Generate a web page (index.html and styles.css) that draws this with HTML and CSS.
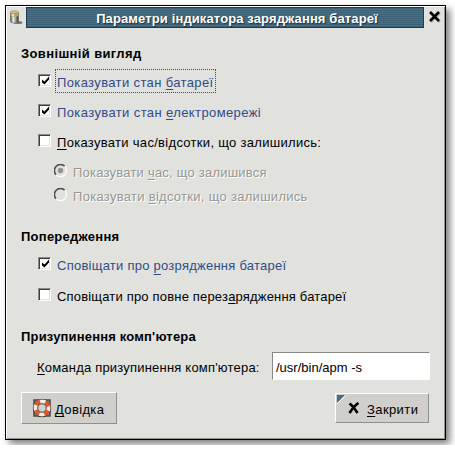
FILE: index.html
```html
<!DOCTYPE html>
<html lang="uk">
<head>
<meta charset="utf-8">
<title>Параметри індикатора заряджання батареї</title>
<link rel="stylesheet" href="styles.css">
</head>
<body>
<div class="window">
  <header class="titlebar">
    <svg class="battery" width="14" height="16" viewBox="0 0 14 16">
      <defs><linearGradient id="can"><stop offset="0" stop-color="#555"/><stop offset=".35" stop-color="#eee"/><stop offset=".65" stop-color="#999"/><stop offset="1" stop-color="#333"/></linearGradient></defs>
      <ellipse cx="9" cy="12.500" rx="4.500" ry="1.600" fill="#77776f"/>
      <path d="M1.500 2.500v9.500q4 2.500 8 0V2.500z" fill="url(#can)" stroke="#666" stroke-width=".7"/>
      <path d="M1.500 2.500v3q4 2.500 8 0V2.500z" fill="#c5a75c"/>
      <path d="M3 2.500v3.500l2 .3V2.500z" fill="#f5e6b0"/>
      <ellipse cx="5.500" cy="2.300" rx="4" ry="1.400" fill="#d5c9a0" stroke="#77705a" stroke-width=".6"/>
    </svg>
    <h1 class="caption"><span class="t-title">Параметри індикатора заряджання батареї</span></h1>
    <svg class="close" width="11" height="11" viewBox="0 0 11 11"><path d="M1 1l9 9M10 1l-9 9" stroke="#000" stroke-width="2.600"/></svg>
  </header>
  <main class="content">
    <section class="group">
      <h2><span class="t-look">Зовнішній вигляд</span></h2>
      <div class="row"><span class="check"><svg width="9" height="9" viewBox="0 0 9 9"><path d="M1 3.500v3l2.500 2 4.500-5v-3l-4.500 5z"/></svg></span><span class="label active focus t-battery">Показувати стан <u>б</u>атареї</span></div>
      <div class="row"><span class="check"><svg width="9" height="9" viewBox="0 0 9 9"><path d="M1 3.500v3l2.500 2 4.500-5v-3l-4.500 5z"/></svg></span><span class="label active t-mains">Показувати стан <u>е</u>лектромережі</span></div>
      <div class="row"><span class="check"></span><span class="label t-time"><u>П</u>оказувати час/відсотки, що залишились:</span></div>
      <div class="row sub"><svg class="radio" width="13" height="13" viewBox="0 0 13 13"><path d="M2.200 10.800A6 6 0 0 1 10.800 2.200" class="dark"/><path d="M10.800 2.200A6 6 0 0 1 2.200 10.800" class="lite"/><circle cx="6.500" cy="6.500" r="2.700" fill="#929290"/></svg><span class="label disabled t-hour">Показувати <u>ч</u>ас, що залишився</span></div>
      <div class="row sub tight"><svg class="radio" width="13" height="13" viewBox="0 0 13 13"><path d="M2.200 10.800A6 6 0 0 1 10.800 2.200" class="dark"/><path d="M10.800 2.200A6 6 0 0 1 2.200 10.800" class="lite"/></svg><span class="label disabled t-percent">Показувати <u>в</u>ідсотки, що залишились</span></div>
    </section>
    <section class="group">
      <h2><span class="t-warn">Попередження</span></h2>
      <div class="row"><span class="check"><svg width="9" height="9" viewBox="0 0 9 9"><path d="M1 3.500v3l2.500 2 4.500-5v-3l-4.500 5z"/></svg></span><span class="label active t-low">Сповіщати про <u class="deep">р</u>озрядження батареї</span></div>
      <div class="row last"><span class="check"></span><span class="label t-full">Сповіщати про повне перез<u>а</u>рядження батареї</span></div>
    </section>
    <section class="group">
      <h2><span class="t-suspend">Призупинення комп'ютера</span></h2>
      <div class="command"><span class="t-command"><u>К</u>оманда призупинення комп'ютера:</span><div class="entry"><span class="t-entry">/usr/bin/apm -s</span></div></div>
    </section>
    <footer class="actions">
      <button class="help">
        <svg width="20" height="20" viewBox="0 0 20 20"><path d="M2 2h16v16H2z" fill="#aaa69f" stroke="#4b4742" stroke-width="1.500" stroke-dasharray="5 6 10 6 10 6 10 6 5"/><circle cx="10" cy="10" r="6.500" fill="none" stroke="#383430" stroke-width="5.500"/><circle cx="10" cy="10" r="6.500" fill="none" stroke="#f3eee8" stroke-width="4"/><circle cx="10" cy="10" r="6.500" fill="none" stroke="#e2542b" stroke-width="4" stroke-dasharray="5.100 5.110" stroke-dashoffset="-2.500"/><circle cx="10" cy="10" r="4.100" fill="#d4d2cd" stroke="#55504b" stroke-width=".8"/></svg>
        <span class="t-help"><u>Д</u>овідка</span>
      </button>
      <button class="dismiss">
        <svg class="corner" width="9" height="9" viewBox="0 0 9 9"><path d="M0 0h8L0 8z" fill="#456f83"/><path d="M9 0L0 9" stroke="#fff"/></svg>
        <svg width="12" height="12" viewBox="0 0 12 12"><path d="M1.500 1.500Q5 4 9.500 11M10.500 1Q6 4 1.500 11" fill="none" stroke="#000" stroke-width="2.600"/></svg>
        <span class="t-close"><u>З</u>акрити</span>
      </button>
    </footer>
  </main>
</div>
</body>
</html>
```
FILE: styles.css
```css
* { box-sizing: border-box; }
body { margin: 0; padding: 5px; background: #fff; font: 13px/20px "Liberation Sans", Arial, sans-serif; color: #000; white-space: nowrap; overflow: hidden; }
.window { width: 441px; height: 435px; border: 1px solid #000; background: #e1e2dd; box-shadow: inset 1px 1px #fff, inset -1px -1px #93948f, 4px 4px 7px rgba(0,0,0,.5); }
.titlebar { display: flex; height: 22px; padding: 1px 4px 0 3px; }
.battery { margin: 3px 3px 0 0; }
.caption { width: 398px; height: 21px; margin: 0; padding-left: 24px; border: 1px solid #203c4b; background: repeating-linear-gradient(#3b6176 0 1px, #4a7085 1px 2px); color: #fff; font-size: 13px; line-height: 21px; text-align: center; text-shadow: 1px 1px 1px #1c303c; }
.close { margin: 4px 0 0 5px; filter: drop-shadow(1px 1px 0 #b7b7b2); }
.content { padding: 16px 15px 0; }
.group { margin-bottom: 20px; }
h2 { margin: 0 0 9px; font-size: 13px; line-height: 20px; }
.row { display: flex; height: 20px; margin: 0 0 10px 17px; }
.row.sub { margin-left: 33px; }
.row.sub:nth-of-type(4) { margin-bottom: 4px; }
.row.tight { margin-bottom: 0; }
.group:nth-of-type(2) .row { margin-bottom: 11px; }
.group:nth-of-type(2) .row.last { margin-bottom: 0; }
.check { width: 13px; height: 13px; margin: 1px 6px 0 0; background: #fff; border: 1px solid; border-color: #8b8c87 #fff #fff #8b8c87; box-shadow: inset 1px 1px #3c3d38, inset -1px -1px #e1e2dd; }
.check svg { display: block; margin: 1px 0 0 2px; }
.radio { margin: 1px 6px 0 0; fill: none; }
.dark { stroke: #4c4d48; stroke-width: 1.5; }
.lite { stroke: #fff; stroke-width: 1.2; }
u { text-decoration: underline 1px; text-underline-offset: 2px; text-decoration-skip-ink: none; }
.deep { text-underline-offset: 4px; }
.active { color: #314b88; }
.focus { height: 20px; margin-top: -2px; padding-top: 2px; outline: 1px dotted #314b88; outline-offset: 1px; }
.disabled { color: #969793; text-shadow: 1px 1px #fff; }
.command { display: flex; height: 28px; margin: -4px 0 0 16px; line-height: 32px; }
.entry { width: 158px; height: 28px; margin-left: auto; padding-left: 3px; background: #fff; border: 1px solid; border-color: #888984 #fff #fff #888984; line-height: 29px; }
.actions { display: flex; justify-content: space-between; align-items: center; margin: -8px 1px 0 0; }
button { display: flex; align-items: center; padding: 0; position: relative; font: inherit; color: inherit; background: #d1cfcc; border: 1px solid; border-color: #fff #8f908b #8f908b #fff; }
.help { width: 96px; height: 32px; padding: 0 0 1px 10px; }
.help span { margin: 5px 0 0 3px; }
.dismiss { width: 94px; height: 30px; padding-left: 12px; }
.dismiss span { margin: 4px 0 0 7px; }
.corner { position: absolute; left: 1px; top: 1px; }
.t-title { letter-spacing: .12px; }
.t-look { letter-spacing: .37px; }
.t-battery { letter-spacing: .37px; }
.t-mains { letter-spacing: .39px; }
.t-time { letter-spacing: .3px; }
.t-hour { letter-spacing: .22px; }
.t-percent { letter-spacing: .29px; }
.t-warn { letter-spacing: .25px; }
.t-low { letter-spacing: .25px; }
.t-full { letter-spacing: .18px; }
.t-suspend { letter-spacing: .18px; }
.t-command { letter-spacing: .2px; }
.t-help { letter-spacing: .35px; }
.t-close { letter-spacing: .4px; }
```
